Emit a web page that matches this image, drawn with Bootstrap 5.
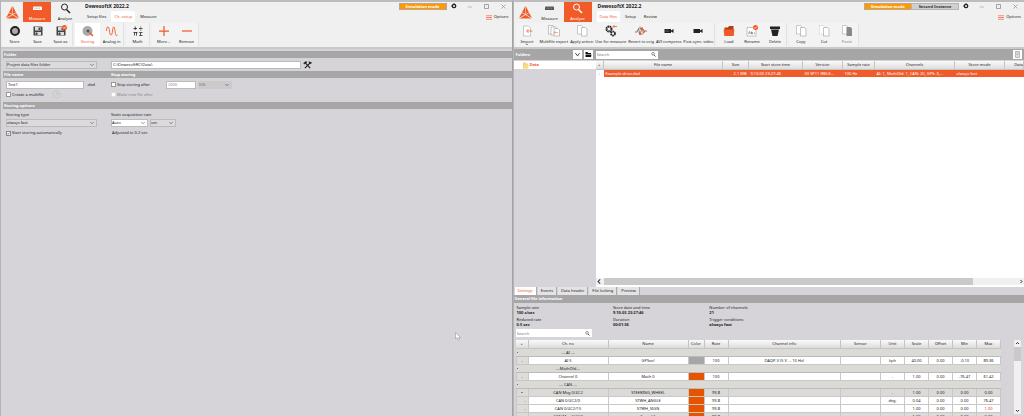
<!DOCTYPE html>
<html lang="en">
<head>
<meta charset="utf-8">
<meta name="viewport" content="width=device-width, initial-scale=1">
<title>DewesoftX 2022.2</title>
<link rel="stylesheet" href="https://cdn.jsdelivr.net/npm/bootstrap@5.3.0/dist/css/bootstrap.min.css">
<style>
:root{--or:#f15a29;--bar:#a6a6a6;--panel:#d6d4d8;--head:#f0f0f0;--ink:#222}
body{font-family:"Noto Sans","Open Sans",sans-serif;font-size:4px;line-height:6px;color:var(--ink);background:var(--panel)}
button,input,select{font:inherit;color:inherit}
button{border:0;padding:0;background:none}
a{color:inherit;text-decoration:none}
svg{display:block;flex:none}
.win{flex:1 1 0;min-width:0;border-left:1px solid #b4b4b4;border-top:2px solid #bdbdbd}
.win-main{border-right:1px solid #a2a2a2}
.top{background:var(--head);border-bottom:2px solid #c9c9c9}
.brand{width:22px;padding:4px 0 0 5px}
.tile{width:28px;height:20px;padding-top:1px;gap:2px}
.tile.on{background:var(--or);color:#fff}
.app-title{font-size:5px;font-weight:700;line-height:8px;color:#222;padding:0 0 1px 1px}
.tabs a{padding:0 3px;line-height:11px}
.tabs a.on{background:#fff;color:var(--or)}
.tag{font-weight:700;line-height:5px;border:1px solid #b5a8a0;background:#ff9900;color:#fff;width:48px;text-align:center}
.tag.alt{background:#d0d0d0;color:#333;border-color:#b5b5b5;margin-left:-1px}
.ctl{width:17px;height:7px}
.ctl.set{width:14px}
.tools{gap:2px;padding:1px 0 1px 2px}
.grp{border-right:1px solid #e2e2e2;background:#f3f3f3}
.tool{min-width:23px;height:23px;padding:2px 1px 0;gap:2px;white-space:nowrap}
.tool.on{background:#fff;color:var(--or);width:25px}
.has-menu{position:relative}
.has-menu::after{content:"";position:absolute;bottom:0;border:1px solid transparent;border-top-color:#333}
.off,.off.form-control{color:#888}
.bar{background:var(--bar);color:#fff;font-weight:700;line-height:7px;padding-left:1px}
.form-area{padding:2px 0 0 2px}
.line{padding-left:3px;height:9px}
.my-line{margin:2px 0}
.tight{margin:2px 0 1px}
.mt-opt{margin-top:3px}
.first{width:105px;flex:none}
.hd-first{width:107px}
.stopbox{width:55px}
.form-control,.form-select{min-height:0;height:8px;padding:0 2px 0 1px;border:1px solid #bbb;border-radius:0;font-size:4px;line-height:6px;color:var(--ink)}
.form-select{background-color:#dcdadd;padding:0 8px 0 0;background-size:4px 4px;background-position:right 2px center}
.form-select.lit{background-color:#fff}
.form-select:disabled{background-color:#cbcbcb;color:#888;border-color:#cbcbcb}
.form-check-input{width:5px;height:5px;margin:0;border:1px solid #999;border-radius:0!important;background-color:#fff;flex:none}
.form-check-input:checked{background-color:#fff;border-color:#888;background-image:url("data:image/svg+xml,%3csvg xmlns='http://www.w3.org/2000/svg' viewBox='0 0 20 20'%3e%3cpath fill='none' stroke='%23222' stroke-width='4' d='M3 10l5 5 9-11'/%3e%3c/svg%3e")}
.form-check-input:disabled{opacity:1;border-color:#ddd}
.form-check-input:disabled~label{opacity:1}
.w-name{width:78px}.w-type{width:91px}.w-path{width:190px}.w-num{width:30px}.w-unit{width:34px}.w-rate{width:37px}.w-sec{width:26px}
.searchbox{background:#fff;height:8px}
.fs-box{width:62px}
.searchbox input{border:0;outline:0;padding:0 0 0 1px;width:100%;min-width:0;height:8px;background:none}
.searchbox input::placeholder{color:#777;opacity:1}
.filebar{background:var(--bar);height:11px;margin-bottom:1px}
.sq{width:9px;height:9px;background:#fff}
.side{width:82px;flex:none}
.treeitem{height:8px;background:#fff;padding-left:8px;color:var(--or);font-weight:700}
.grid{table-layout:fixed;width:100%;border-collapse:collapse;text-align:center}
.grid th,.grid td{height:8px;padding:0;line-height:7px;white-space:nowrap;overflow:hidden}
.grid th{font-weight:400;background:linear-gradient(#fafafa,#dcdcdc);border-right:1px solid #c4c4c4;border-bottom:1px solid #c4c4c4}
.files tbody td{background:var(--or);color:#fff}
.files tbody td:first-child{background:#fff;color:#777}
.files td.txt{text-align:left;padding-left:2px}
.hscroll{height:7px;background:#f0f0f0}
.hscroll i{background:#c9c9c9;margin-right:46px}
.dock{height:129px;flex:none;overflow:hidden}
.dtabs{gap:1px;padding-left:1px}
.dtabs a{line-height:8px;padding:0 3px;background:#e4e2e4;border-right:1px solid #aaa}
.dtabs a.on{background:#fff;color:var(--or)}
.dbar{line-height:8px}
.facts{grid-template-columns:19% 19% 1fr;line-height:5px;row-gap:2px;padding:2px 0 2px 3px}
.facts dd{margin:0;font-weight:700;color:#222}
.facts dt{font-weight:400}
.dsearch{width:76px;margin-left:2px}
.dlist{margin:3px 0 0 2px}
.chan{background:#fff}
.chan td{border:1px solid #c8c8c8;background:#fff}
.chan td:first-child{background:#dddcd8}
.chan .sec td,.chan .msg td{background:#dbdad6}
.chan .sec td{border-color:#dbdad6;border-bottom-color:#bbb}
.chan td.c-or{background:#e65400}
.chan td.c-gr{background:#a6a6a6}
.warn{color:#e33}
.vscroll{width:7px;background:#f0f0f0;margin:0 3px 2px 13px}
.vscroll i{height:14px;background:#c9c9c9}
.pointer-mark{position:absolute;left:455px;top:332px}
.ms-1px{margin-left:1px}.pt-1px{padding-top:1px}.ms-2px{margin-left:2px}.me-2px{margin-right:2px}.me-3px{margin-right:3px}.mb-2px{margin-bottom:2px}.pe-2px{padding-right:2px!important}.gap-2px{gap:2px}
.opts{margin:4px 3px 0 0}
.w8{width:8px}.w12{width:12px}.w16{width:16px}.w19{width:19px}.w24{width:24px}.w26{width:26px}.w32{width:32px}.w40{width:40px}.w50{width:50px}.w54{width:54px}.w80{width:80px}
</style>
</head>
<body class="vh-100 overflow-hidden">
<svg width="0" height="0" class="position-absolute" aria-hidden="true">
<defs>
<symbol id="logo" viewBox="0 0 26 26"><path fill="#f15a29" d="M12.500 0L6 13l6.500 3zM13.500 0v16l6.500-3zM5.500 14L0 24l12-7zM20.500 14L14 17l12 7zM13 18L1 25h24z"/></symbol>
<symbol id="meas" viewBox="0 0 22 22"><path fill="currentColor" d="M4 7h14a2 2 0 0 1 2 2v5H2V9a2 2 0 0 1 2-2z"/><path stroke="#999" d="M6 9v3M9 9v3M12 9v3M15 9v3"/></symbol>
<symbol id="mag" viewBox="0 0 22 22"><circle cx="9" cy="8" r="6" fill="none" stroke="currentColor" stroke-width="2"/><path d="M13 13l7 7" stroke="currentColor" stroke-width="3"/></symbol>
<symbol id="gear" viewBox="0 0 14 14"><circle cx="7" cy="7" r="4" fill="none" stroke="#222" stroke-width="3"/><path stroke="#222" stroke-width="2" stroke-dasharray="2 8" d="M7 0v14M0 7h14"/></symbol>
<symbol id="min" viewBox="0 0 14 14"><path d="M3 8h9" stroke="#888"/></symbol>
<symbol id="max" viewBox="0 0 14 14"><path d="M3 3h8v8H3z" stroke="#888" stroke-width="1.500" fill="none"/></symbol>
<symbol id="cls" viewBox="0 0 14 14"><path d="M3 3l8 8M11 3l-8 8" stroke="#888" stroke-width="1.300"/></symbol>
<symbol id="opt" viewBox="0 0 12 10"><path d="M0 1.500h12M0 5h12M0 8.500h12" stroke="#f58a70" stroke-width="2.400"/></symbol>
<symbol id="store" viewBox="0 0 24 24"><circle cx="12" cy="12" r="8" fill="#aaa" stroke="#222" stroke-width="4"/></symbol>
<symbol id="save" viewBox="0 0 24 24"><path d="M3 3h16l2 2v16H3z" fill="#444"/><path fill="#ddd" d="M6 4h11v7H6zM6 14h12v6H6z"/><path fill="#444" d="M13 5h3v5h-3zM7 15h4v5H7z"/></symbol>
<symbol id="badge" viewBox="0 0 10 10"><circle cx="5" cy="5" r="5" fill="#f15a29"/><path d="M2 5l2 2 4-4" fill="none" stroke="#fff" stroke-width="1.500"/></symbol>
<symbol id="storing" viewBox="0 0 24 24"><circle cx="11" cy="12" r="10" fill="#aaa"/><circle cx="12" cy="12" r="4" fill="#555" stroke="#ddd"/><path d="M15 15l7 7" stroke="#f15a29" stroke-width="3"/></symbol>
<symbol id="sine" viewBox="0 0 24 24"><path d="M1 12C1 1 6 1 7 12s5 11 6 0 4-11 5 0 3 10 5 8" fill="none" stroke="#f15a29" stroke-width="1.800"/></symbol>
<symbol id="math" viewBox="0 0 24 24"><path d="M3 7h7M6.500 3v7M14 7h7M17.500 3v2M17.500 9v2M3 15h8M5 15v6M9 15v6M21 15h-6l3 3-3 3h6" fill="none" stroke="#333" stroke-width="1.700"/></symbol>
<symbol id="plus" viewBox="0 0 24 24"><path d="M12 2v20M2 12h20" stroke="#f15a29" stroke-width="2.500"/></symbol>
<symbol id="minus" viewBox="0 0 24 24"><path d="M2 12h20" stroke="#f15a29" stroke-width="2.500"/></symbol>
<symbol id="import" viewBox="0 0 24 24"><path d="M5 2h10l4 4v16H5z" fill="#fff" stroke="#999"/><path d="M23 12H12M15 8l-4 4 4 4" fill="none" stroke="#f15a29" stroke-width="1.500"/></symbol>
<symbol id="multi" viewBox="0 0 24 24"><path d="M1 1h9l2 3v14H1z" fill="#fff" stroke="#888"/><path d="M6 4h9l2 3v13H6z" fill="#fff" stroke="#888"/><path d="M12 7h8l3 3v12H12z" fill="#fff" stroke="#888"/><path d="M20 15h-7M15 12l-3 3 3 3" fill="none" stroke="#f15a29"/></symbol>
<symbol id="copy" viewBox="0 0 24 24"><path d="M3 1h8l3 3v14H3z" fill="#fff" stroke="#999"/><path d="M11 5h8l3 3v14H11z" fill="#fff" stroke="#888"/></symbol>
<symbol id="cut" viewBox="0 0 24 24"><path d="M3 1h8l3 3v14H3z" fill="#fff" stroke="#999" stroke-dasharray="2 2"/><path d="M11 5h8l3 3v14H11z" fill="#fff" stroke="#888"/></symbol>
<symbol id="paste" viewBox="0 0 24 24"><path d="M3 1h8l3 3v14H3z" fill="#fff" stroke="#999"/><path d="M11 4h8l3 3v15H11z" fill="#888"/></symbol>
<symbol id="gears" viewBox="0 0 24 24"><circle cx="8" cy="8" r="5" fill="none" stroke="#222" stroke-width="4" stroke-dasharray="3 1"/><circle cx="16" cy="17" r="4" fill="none" stroke="#222" stroke-width="3.500" stroke-dasharray="3 1"/><path d="M16 3h8M19 0l-3 3 3 3" fill="none" stroke="#f15a29" stroke-width="1.500"/></symbol>
<symbol id="revert" viewBox="0 0 24 24"><path d="M0 14h4l3-7 3 13 4-15 3 11 2-4h5" fill="none" stroke="#555" stroke-width="1.500"/><path d="M7 15a6 6 0 1 0 3-8M10 3v5h5" fill="none" stroke="#f15a29" stroke-width="2"/></symbol>
<symbol id="cam" viewBox="0 0 24 24"><path d="M3 8h13v3l5-3v8l-5-3v3H3z" fill="#222"/><path d="M5 10h7M5 13h7" stroke="#777"/></symbol>
<symbol id="cam2" viewBox="0 0 24 24"><path d="M3 8h13v3l5-3v8l-5-3v3H3z" fill="#222"/></symbol>
<symbol id="load" viewBox="0 0 24 24"><path d="M3 5h7l2-3h9v19H3z" fill="#b33d16"/><path d="M1 9h22l-2 13H3z" fill="#f15a29"/></symbol>
<symbol id="ren" viewBox="0 0 24 24"><path d="M2 5h14l4 4v13H2z" fill="#fff" stroke="#888"/><path d="M5 18l2-5 2 5M11 13v5h2v-3h-2M17 15v3" fill="none" stroke="#444"/></symbol>
<symbol id="bin" viewBox="0 0 24 24"><path d="M2 3h20v5H2zM4 9h16l-3 13H7z" fill="#222"/></symbol>
<symbol id="fold" viewBox="0 0 14 14"><path d="M1 2h4l1 2h6v2H1zM1 7h12l-1 5H1z" fill="#111"/></symbol>
<symbol id="chev" viewBox="0 0 10 10"><path d="M2 3l3 4 3-4" fill="none" stroke="#333" stroke-width="1.300"/></symbol>
<symbol id="fix" viewBox="0 0 20 18"><path d="M4 3l12 13M16 4L4 16" stroke="#222" stroke-width="2.500"/><path d="M1 5l5-4 3 1-5 5zM13 1l1 4 4 1 1-3" fill="#222" stroke="#222"/></symbol>
</defs>
</svg>

<div class="d-flex h-100 position-relative">
<section class="win win-main d-flex flex-column">
 <header class="top">
  <div class="d-flex">
   <div class="brand"><svg width="13" height="13"><use href="#logo"/></svg></div>
   <button class="tile on d-flex flex-column align-items-center"><svg width="11" height="11"><use href="#meas"/></svg>Measure</button>
   <button class="tile d-flex flex-column align-items-center"><svg width="11" height="11" color="#222"><use href="#mag"/></svg>Analyze</button>
   <div class="ps-1 ms-1px flex-grow-1">
    <div class="app-title">DewesoftX 2022.2</div>
    <nav class="tabs d-flex gap-2px"><a href="#">Setup files</a><a href="#" class="on">Ch. setup</a><a href="#">Measure</a></nav>
   </div>
   <div class="d-flex flex-column align-items-end">
    <div class="d-flex align-items-center pt-1px"><span class="tag">Simulation mode</span>
     <button class="ctl set d-flex justify-content-center" aria-label="Settings"><svg width="6" height="6"><use href="#gear"/></svg></button>
     <button class="ctl d-flex justify-content-center" aria-label="Minimize"><svg width="7" height="7"><use href="#min"/></svg></button>
     <button class="ctl d-flex justify-content-center" aria-label="Maximize"><svg width="7" height="7"><use href="#max"/></svg></button>
     <button class="ctl d-flex justify-content-center" aria-label="Close"><svg width="7" height="7"><use href="#cls"/></svg></button></div>
    <button class="d-flex align-items-center opts"><svg width="6" height="5" class="me-2px"><use href="#opt"/></svg>Options</button>
   </div>
  </div>
  <div class="tools d-flex">
   <div class="grp d-flex">
    <button class="tool d-flex flex-column align-items-center"><svg width="12" height="12"><use href="#store"/></svg>Store</button>
    <button class="tool d-flex flex-column align-items-center"><svg width="12" height="12"><use href="#save"/></svg>Save</button>
    <button class="tool d-flex flex-column align-items-center"><svg width="12" height="12"><use href="#save"/><use href="#badge" x="7" width="5" height="5"/></svg>Save as</button>
   </div>
   <div class="grp d-flex">
    <button class="tool on d-flex flex-column align-items-center"><svg width="12" height="12"><use href="#storing"/></svg>Storing</button>
    <button class="tool d-flex flex-column align-items-center"><svg width="12" height="12"><use href="#sine"/></svg>Analog in</button>
   </div>
   <div class="grp d-flex">
    <button class="tool d-flex flex-column align-items-center"><svg width="12" height="12"><use href="#math"/></svg>Math</button>
   </div>
   <div class="grp d-flex">
    <button class="tool d-flex flex-column align-items-center"><svg width="12" height="12"><use href="#plus"/></svg>More...</button>
    <button class="tool d-flex flex-column align-items-center"><svg width="12" height="12"><use href="#minus"/></svg>Remove</button>
   </div>
  </div>
 </header>
 <form class="form-area d-flex flex-column">
  <div class="bar">Folder</div>
  <div class="line d-flex align-items-center my-line">
   <div class="first"><select class="form-select w-type" aria-label="Folder"><option>Project data files folder</option></select></div>
   <input class="form-control w-path" aria-label="Path" value="C:\DewesoftRC\Data\">
   <button type="button" class="ms-2px" aria-label="Folder settings"><svg width="9" height="8"><use href="#fix"/></svg></button>
  </div>
  <div class="bar d-flex"><label for="fname" class="hd-first">File name</label><span>Stop storing</span></div>
  <div class="line d-flex align-items-center tight">
   <div class="first d-flex align-items-center"><input id="fname" class="form-control w-name" value="Test1"><span class="ms-2px">&nbsp;.dxd</span></div>
   <div class="d-flex align-items-center stopbox"><input type="checkbox" class="form-check-input" id="stop"><label for="stop">&nbsp;Stop storing after</label></div>
   <input class="form-control w-num off" aria-label="Limit" value="2000">
   <select class="form-select w-unit ms-2px" aria-label="Limit unit" disabled><option>MB</option></select>
  </div>
  <div class="line d-flex align-items-center">
   <div class="first d-flex align-items-center"><input type="checkbox" class="form-check-input" id="multif"><label for="multif">&nbsp;Create a multifile</label>
    <svg class="ms-2" width="9" height="9" viewBox="0 0 18 18"><circle cx="9" cy="9" r="7.500" fill="none" stroke="#bbb"/><path d="M6 12l6-6M8 6h4v4" stroke="#bbb" fill="none"/></svg></div>
   <input type="checkbox" class="form-check-input" id="newf" disabled><label for="newf" class="off">&nbsp;Make new file after</label>
  </div>
  <div class="bar mt-opt">Storing options</div>
  <div class="line d-flex align-items-end"><label class="first" for="stype">Storing type</label><label for="srate">Static acquisition rate</label></div>
  <div class="line d-flex align-items-end">
   <div class="first"><select id="stype" class="form-select w-type"><option>always fast</option></select></div>
   <select id="srate" class="form-select lit w-rate"><option>Auto</option></select>
   <select class="form-select w-sec ms-2px" aria-label="Rate unit"><option>sec</option></select>
  </div>
  <div class="line d-flex align-items-end">
   <div class="first d-flex align-items-center"><input type="checkbox" class="form-check-input" id="auto" checked><label for="auto">&nbsp;Start storing automatically</label></div>
   <span>&nbsp;Adjusted to 0.2 sec</span>
  </div>
 </form>
 <svg class="pointer-mark" width="6" height="9" viewBox="0 0 12 18"><path d="M1 1v13l3-3 3 6 2-1-2-5h4z" fill="#fff" stroke="#888"/></svg>
</section>

<section class="win d-flex flex-column">
 <header class="top">
  <div class="d-flex">
   <div class="brand"><svg width="13" height="13"><use href="#logo"/></svg></div>
   <button class="tile d-flex flex-column align-items-center"><svg width="11" height="11" color="#555"><use href="#meas"/></svg>Measure</button>
   <button class="tile on d-flex flex-column align-items-center"><svg width="11" height="11"><use href="#mag"/></svg>Analyze</button>
   <div class="ps-1 ms-1px flex-grow-1">
    <div class="app-title">DewesoftX 2022.2</div>
    <nav class="tabs d-flex gap-2px"><a href="#" class="on">Data files</a><a href="#">Setup</a><a href="#">Review</a></nav>
   </div>
   <div class="d-flex flex-column align-items-end">
    <div class="d-flex align-items-center pt-1px"><span class="tag">Simulation mode</span><span class="tag alt">Second Instance</span>
     <button class="ctl set d-flex justify-content-center" aria-label="Settings"><svg width="6" height="6"><use href="#gear"/></svg></button>
     <button class="ctl d-flex justify-content-center" aria-label="Minimize"><svg width="7" height="7"><use href="#min"/></svg></button>
     <button class="ctl d-flex justify-content-center" aria-label="Maximize"><svg width="7" height="7"><use href="#max"/></svg></button>
     <button class="ctl d-flex justify-content-center" aria-label="Close"><svg width="7" height="7"><use href="#cls"/></svg></button></div>
    <button class="d-flex align-items-center opts"><svg width="6" height="5" class="me-2px"><use href="#opt"/></svg>Options</button>
   </div>
  </div>
  <div class="tools d-flex">
   <div class="grp d-flex">
    <button class="tool has-menu d-flex flex-column align-items-center"><svg width="12" height="12"><use href="#import"/></svg>Import</button>
    <button class="tool d-flex flex-column align-items-center"><svg width="12" height="12"><use href="#multi"/></svg>Multifile export</button>
    <button class="tool d-flex flex-column align-items-center"><svg width="12" height="12"><use href="#copy"/></svg>Apply action</button>
    <button class="tool d-flex flex-column align-items-center"><svg width="12" height="12"><use href="#gears"/></svg>Use for measure</button>
    <button class="tool d-flex flex-column align-items-center"><svg width="12" height="12"><use href="#revert"/></svg>Revert to orig</button>
    <button class="tool d-flex flex-column align-items-center"><svg width="12" height="12"><use href="#cam"/></svg>AVI compress</button>
    <button class="tool d-flex flex-column align-items-center"><svg width="12" height="12"><use href="#cam2"/></svg>Post-sync. video</button>
   </div>
   <div class="grp d-flex">
    <button class="tool d-flex flex-column align-items-center"><svg width="12" height="12"><use href="#load"/></svg>Load</button>
    <button class="tool d-flex flex-column align-items-center"><svg width="12" height="12"><use href="#ren"/><use href="#badge" x="7" width="5" height="5"/></svg>Rename</button>
    <button class="tool d-flex flex-column align-items-center"><svg width="12" height="12"><use href="#bin"/></svg>Delete</button>
   </div>
   <div class="grp d-flex">
    <button class="tool d-flex flex-column align-items-center"><svg width="12" height="12"><use href="#copy"/></svg>Copy</button>
    <button class="tool d-flex flex-column align-items-center"><svg width="12" height="12"><use href="#cut"/></svg>Cut</button>
    <button class="tool off d-flex flex-column align-items-center"><svg width="12" height="12"><use href="#paste"/></svg>Paste</button>
   </div>
  </div>
 </header>
 <div class="filebar d-flex align-items-center">
  <div class="side d-flex align-items-center gap-2px text-white fw-bold"><span class="flex-grow-1 ms-2px">Folders</span>
   <button class="sq d-flex align-items-center justify-content-center" aria-label="Choose folder"><svg width="7" height="7"><use href="#chev"/></svg></button>
   <button class="sq d-flex align-items-center justify-content-center me-3px" aria-label="Open folder"><svg width="7" height="7"><use href="#fold"/></svg></button></div>
  <div class="searchbox fs-box d-flex align-items-center"><input type="text" placeholder="Search" aria-label="Search files"><svg width="5" height="5" class="me-2px" color="#222"><use href="#mag"/></svg></div>
  <button class="sq ms-auto me-2px d-flex align-items-center justify-content-center" aria-label="Details"><svg width="5" height="7" viewBox="0 0 10 14"><path d="M1 1h8v12H1z" fill="#ddd" stroke="#888"/><path d="M3 4h4M3 7h4" stroke="#999"/></svg></button>
 </div>
 <div class="d-flex flex-grow-1 overflow-hidden">
  <div class="side"><a href="#" class="d-flex align-items-center treeitem"><svg width="7" height="7" viewBox="0 0 14 14"><path d="M2 1h5l1 2h4v10H2z" fill="#f5cf6a"/><path d="M4 5h9v8H3z" fill="#fadb86"/></svg>&nbsp;Data</a></div>
  <div class="bg-white flex-grow-1 d-flex flex-column overflow-hidden">
   <table class="grid files">
    <colgroup><col class="w8"><col><col class="w26"><col class="w54"><col class="w40"><col class="w32"><col class="w80"><col class="w50"><col class="w19"></colgroup>
    <thead><tr><th>+</th><th>File name</th><th>Size</th><th>Start store time</th><th>Version</th><th>Sample rate</th><th>Channels</th><th>Store mode</th><th class="text-end">Data</th></tr></thead>
    <tbody><tr><td>›</td><td class="txt">Example drive.dxd</td><td class="text-end pe-2px">2.1 MB</td><td class="txt">9.10.03 23:27:46</td><td class="txt">X3 SP11 (RELE...</td><td class="txt">100 Hz</td><td class="txt">AI: 1, MathOld: 1, CAN: 20, GPS: 3,...</td><td class="txt">always fast</td><td></td></tr></tbody>
   </table>
   <div class="hscroll mt-auto mb-2px d-flex"><button aria-label="Scroll left" class="w8"><svg width="7" height="7" viewBox="0 0 10 10"><path d="M6 2L3 5l3 3" fill="none" stroke="#333" stroke-width="1.500"/></svg></button><i class="flex-grow-1"></i><button aria-label="Scroll right"><svg width="5" height="5" viewBox="0 0 10 10"><path d="M3 2l3 3-3 3" fill="none" stroke="#333" stroke-width="2"/></svg></button></div>
  </div>
 </div>
 <div class="dock d-flex flex-column">
  <nav class="dtabs d-flex"><a href="#" class="on">Settings</a><a href="#">Events</a><a href="#">Data header</a><a href="#">File locking</a><a href="#">Preview</a></nav>
  <div class="bar dbar">General file information</div>
  <dl class="facts d-grid mb-0">
   <div><dt>Sample rate</dt><dd>100 s/sec</dd></div><div><dt>Store date and time</dt><dd>9.10.03 23:27:46</dd></div><div><dt>Number of channels</dt><dd>21</dd></div>
   <div><dt>Reduced rate</dt><dd>0.5 sec</dd></div><div><dt>Duration</dt><dd>00:01:36</dd></div><div><dt>Trigger conditions</dt><dd>always fast</dd></div>
  </dl>
  <div class="searchbox dsearch d-flex align-items-center flex-shrink-0"><input type="text" placeholder="Search" aria-label="Search channels"><svg width="5" height="5" class="me-2px" color="#222"><use href="#mag"/></svg></div>
  <div class="d-flex flex-grow-1 overflow-hidden dlist">
   <div class="flex-grow-1 overflow-hidden">
   <table class="grid chan">
    <colgroup><col class="w12"><col class="w80"><col class="w80"><col class="w16"><col class="w24"><col><col class="w40"><col class="w24"><col class="w24"><col class="w24"><col class="w24"><col class="w24"></colgroup>
    <thead><tr><th>+</th><th>Ch. no</th><th>Name</th><th>Color</th><th>Rate</th><th>Channel info</th><th>Sensor</th><th>Unit</th><th>Scale</th><th>Offset</th><th>Min</th><th>Max</th></tr></thead>
    <tbody>
    <tr class="sec"><td class="text-start">▪</td><td>--- AI ---</td><td colspan="10"></td></tr>
    <tr><td>-</td><td>AI 5</td><td>GPSvel</td><td class="c-gr"></td><td>100</td><td>DAQP-V (5 V ... 10 Hz)</td><td></td><td>kph</td><td>40.00</td><td>0.00</td><td>-0.10</td><td>89.36</td></tr>
    <tr class="sec"><td class="text-start">▪</td><td>---MathOld---</td><td colspan="10"></td></tr>
    <tr><td>-</td><td>Channel 0</td><td>Math 0</td><td class="c-or"></td><td>100</td><td></td><td></td><td>-</td><td>1.00</td><td>0.00</td><td>-76.47</td><td>61.42</td></tr>
    <tr class="sec"><td class="text-start">▪</td><td>--- CAN ---</td><td colspan="10"></td></tr>
    <tr class="msg"><td>▪</td><td>CAN Msg 0/#C2</td><td>STEERING_WHEEL</td><td class="c-or"></td><td>99.8</td><td></td><td></td><td>-</td><td>1.00</td><td>0.00</td><td>0.00</td><td>0.00</td></tr>
    <tr><td class="text-end pe-2px">-</td><td>CAN 0/#C2/0</td><td>STWH_ANGLE</td><td class="c-or"></td><td>99.8</td><td></td><td></td><td>deg.</td><td>0.04</td><td>0.00</td><td>0.00</td><td>76.47</td></tr>
    <tr><td class="text-end pe-2px">-</td><td>CAN 0/#C2/15</td><td>STWH_SIGN</td><td class="c-or"></td><td>99.8</td><td></td><td></td><td></td><td>1.00</td><td>0.00</td><td>0.00</td><td class="warn">1.00</td></tr>
    <tr class="msg"><td>▪</td><td>CAN Msg 0/#C3</td><td>Speed 1</td><td class="c-or"></td><td>99.8</td><td></td><td></td><td>-</td><td>1.00</td><td>0.00</td><td>0.00</td><td>0.00</td></tr>
    </tbody>
   </table>
   </div>
   <div class="vscroll d-flex flex-column align-items-center flex-shrink-0"><button aria-label="Scroll up"><svg width="7" height="7" viewBox="0 0 14 14"><path d="M4 8l3-3 3 3" fill="none" stroke="#333" stroke-width="2"/></svg></button><i class="w-100"></i><button aria-label="Scroll down" class="mt-auto"><svg width="7" height="7" viewBox="0 0 14 14"><path d="M4 6l3 3 3-3" fill="none" stroke="#333" stroke-width="2"/></svg></button></div>
  </div>
 </div>
</section>
</div>
<script src="https://cdn.jsdelivr.net/npm/bootstrap@5.3.0/dist/js/bootstrap.bundle.min.js"></script>
</body>
</html>
